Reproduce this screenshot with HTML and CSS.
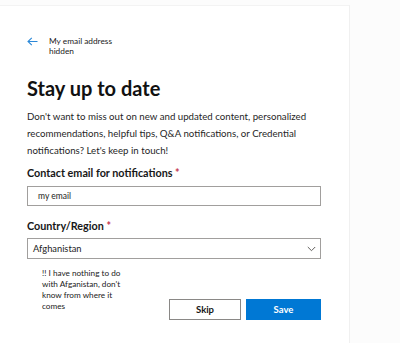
FILE: index.html
```html
<!DOCTYPE html>
<html>
<head>
<meta charset="utf-8">
<link rel="stylesheet" href="styles.css">
</head>
<body>
<div class="page">
  <div class="panel">
    <div class="back">
      <svg class="arrow" width="11" height="9" viewBox="0 0 11 9"><path d="M10.5 4.5H1M4.8 0.8L1 4.5L4.8 8.2" fill="none" stroke="#2b88d8" stroke-width="1.1"/></svg>
      <span class="back-text">My email address<br>hidden</span>
    </div>
    <h1 class="title">Stay up to date</h1>
    <p class="intro">Don't want to miss out on new and updated content, personalized recommendations, helpful tips, Q&amp;A notifications, or Credential notifications? Let's keep in touch!</p>
    <label class="label">Contact email for notifications <span class="req">*</span></label>
    <div class="input">my email</div>
    <label class="label label-country">Country/Region <span class="req">*</span></label>
    <div class="select">
      <span>Afghanistan</span>
      <svg width="9" height="6" viewBox="0 0 9 6"><path d="M0.8 1L4.5 4.7L8.2 1" fill="none" stroke="#605e5c" stroke-width="1"/></svg>
    </div>
    <div class="footer">
      <div class="note">!! I have nothing to do with Afganistan, don't know from where it comes</div>
      <div class="buttons">
        <button class="btn btn-skip">Skip</button>
        <button class="btn btn-save">Save</button>
      </div>
    </div>
  </div>
</div>
</body>
</html>
```
FILE: styles.css
```css
* { box-sizing: border-box; }
html, body { margin: 0; padding: 0; }
body {
  width: 400px;
  height: 343px;
  background: #fcfcfc;
  font-family: "Lato", "Open Sans", sans-serif;
  color: #171717;
  overflow: hidden;
}
.page {
  padding-top: 5px;
}
.panel {
  width: 350px;
  height: 338px;
  background: #fff;
  border-top: 1px solid #f3f3f3;
  border-right: 1px solid #f0f0f0;
  padding: 30px 28px 0 27px;
}
.back {
  display: flex;
  align-items: flex-start;
  gap: 11px;
}
.arrow { margin-top: 1px; }
.back-text {
  font-size: 8.3px;
  line-height: 10px;
  color: #222;
}
.title {
  margin: 19px 0 0 0;
  font-size: 20px;
  font-weight: 700;
  line-height: 26px;
  color: #111;
}
.intro {
  margin: 7px 0 0 0;
  font-size: 9.7px;
  line-height: 17px;
  color: #1f1f1f;
}
.label {
  display: block;
  margin-top: 7px;
  font-size: 10.8px;
  font-weight: 700;
  line-height: 14px;
  color: #171717;
}
.req { color: #c4314b; }
.label-country { margin-top: 13px; }
.input {
  margin-top: 6px;
  height: 20px;
  border: 1px solid #a19f9d;
  padding: 0 10px;
  font-size: 8.5px;
  line-height: 18px;
  color: #222;
}
.select {
  margin-top: 5px;
  height: 21px;
  border: 1px solid #a19f9d;
  padding: 0 4px 0 5px;
  display: flex;
  align-items: center;
  justify-content: space-between;
  font-size: 9.3px;
  color: #222;
}
.footer {
  display: flex;
  justify-content: space-between;
  margin-top: 9px;
}
.note {
  margin-left: 15px;
  width: 90px;
  font-size: 8.2px;
  line-height: 11px;
  color: #222;
}
.buttons {
  display: flex;
  gap: 5px;
  margin-top: 31px;
}
.btn {
  height: 21px;
  font-family: "Lato", "Open Sans", sans-serif;
  font-size: 9.5px;
  font-weight: 700;
  padding: 0;
  cursor: pointer;
}
.btn-skip {
  width: 72px;
  background: #fff;
  border: 1px solid #8a8886;
  color: #171717;
}
.btn-save {
  width: 75px;
  background: #0078d4;
  border: 1px solid #0078d4;
  color: #fff;
}
```
